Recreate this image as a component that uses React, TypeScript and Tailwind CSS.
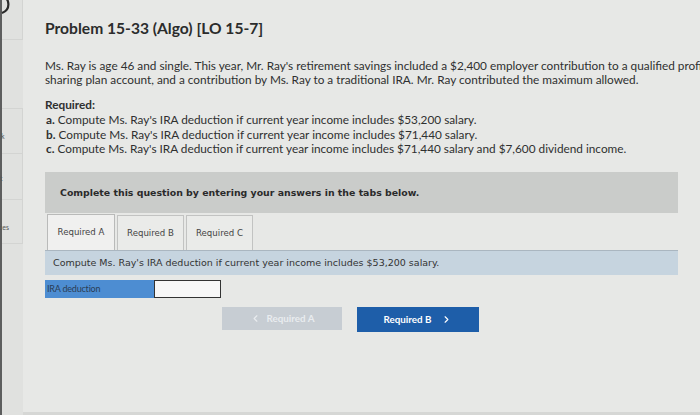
import { ChevronLeft, ChevronRight } from 'lucide-react';

const body = "font-['Lato','Open_Sans',sans-serif]";
const verdana = "font-['DejaVu_Sans','Verdana',sans-serif]";

const requiredLines = [
  ['a.', "Compute Ms. Ray's IRA deduction if current year income includes $53,200 salary."],
  ['b.', "Compute Ms. Ray's IRA deduction if current year income includes $71,440 salary."],
  ['c.', "Compute Ms. Ray's IRA deduction if current year income includes $71,440 salary and $7,600 dividend income."],
];

function Sidebar() {
  return (
    <aside className="flex w-[23px] shrink-0 flex-col border-l-[2px] border-[#5d5e5e] bg-[#e0e1df]">
      <div className="relative h-[40px] border-b border-r border-[#d3d4d2]">
        <svg className="absolute left-[-2px] top-[-6px]" width="14" height="22" viewBox="0 0 14 22">
          <path d="M2 2 C 10 4, 11 16, 2 19" fill="none" stroke="#2a2a2a" strokeWidth="2.2" />
        </svg>
      </div>
      <div className="h-[68px]" />
      <div className={`flex h-[46px] items-center border-y border-r border-[#d3d4d2] text-[7px] text-[#555] ${body}`}>
        <span className="ml-[-1px] mt-[10px]">k</span>
      </div>
      <div className={`flex h-[46px] items-center border-b border-r border-[#d3d4d2] text-[7px] text-[#555] ${body}`}>
        <span className="ml-[-2px] mt-[4px] leading-[9px]">t</span>
      </div>
      <div className={`flex h-[44px] items-center border-b border-r border-[#d3d4d2] text-[7px] text-[#555] ${body}`}>
        <span className="ml-[-3px] mt-[12px]">ces</span>
      </div>
    </aside>
  );
}

export default function App() {
  return (
    <div className="flex h-[415px] w-[700px] overflow-hidden bg-[#e7e8e6]">
      <Sidebar />
      <main className="relative min-w-0 flex-1 overflow-hidden pl-[22px] text-[#2f3030]">
        <h1 className={`mt-[19px] whitespace-nowrap text-[15.6px] font-bold leading-[18px] text-[#2b2c2c] ${body}`}>
          Problem 15-33 (Algo) [LO 15-7]
        </h1>

        <div className={`mt-[22px] whitespace-nowrap text-[11.8px] leading-[13.5px] ${body}`}>
          <p>Ms. Ray is age 46 and single. This year, Mr. Ray's retirement savings included a $2,400 employer contribution to a qualified profit-</p>
          <p>sharing plan account, and a contribution by Ms. Ray to a traditional IRA. Mr. Ray contributed the maximum allowed.</p>
        </div>

        <div className={`mt-[12px] whitespace-nowrap text-[11.8px] leading-[14.8px] ${body}`}>
          <p className="font-bold">Required:</p>
          {requiredLines.map(([letter, text]) => (
            <p key={letter} className="pl-[1px]">
              <span className="font-bold">{letter}</span> {text}
            </p>
          ))}
        </div>

        <div className="mt-[15px] flex h-[41px] w-[633px] items-center bg-[#caccca] pl-[15px]">
          <span className={`text-[9.4px] font-bold text-[#2a2a2a] ${verdana}`}>
            Complete this question by entering your answers in the tabs below.
          </span>
        </div>

        <div className={`mt-[1px] flex items-end gap-[2px] pl-[2px] text-[8.6px] text-[#444] ${verdana}`}>
          <div className="flex h-[36px] w-[68px] items-center justify-center border border-b-0 border-[#b9bab9] bg-[#f0f0ef]">Required A</div>
          <div className="flex h-[35px] w-[67px] items-center justify-center border border-b-0 border-[#c2c3c2] bg-[#eaebe9]">Required B</div>
          <div className="flex h-[35px] w-[67px] items-center justify-center border border-b-0 border-[#c2c3c2] bg-[#eaebe9]">Required C</div>
        </div>

        <div className="flex h-[25px] w-[633px] items-center border-t border-[#aab6c0] bg-[#c6d4df] pl-[8px]">
          <span className={`whitespace-nowrap text-[9.5px] text-[#333] ${verdana}`}>
            Compute Ms. Ray's IRA deduction if current year income includes $53,200 salary.
          </span>
        </div>

        <div className="mt-[5px] flex h-[18px]">
          <div className={`flex w-[109px] items-center bg-[#4d8dd2] pl-[2px] text-[9px] tracking-[-0.2px] text-[#2b3d55] ${body}`}>
            IRA deduction
          </div>
          <input
            type="text"
            className="h-[18px] w-[67px] border border-[#333] bg-[#f7f7f7] outline-none"
            defaultValue=""
          />
        </div>

        <div className={`mt-[9px] flex gap-[15px] pl-[177px] text-[9.8px] font-bold ${body}`}>
          <button className="flex h-[23px] w-[120px] items-center justify-center gap-[6px] bg-[#c7cdd3] text-[#e9ecef]">
            <ChevronLeft size={11} strokeWidth={2.5} />
            Required A
          </button>
          <button className="flex h-[25px] w-[122px] items-center justify-center gap-[10px] bg-[#1e5ea9] text-white">
            Required B
            <ChevronRight size={11} strokeWidth={2.5} />
          </button>
        </div>

        <div className="absolute bottom-0 left-0 right-0 h-[3px] bg-[#d6d7d5]" />
      </main>
    </div>
  );
}
